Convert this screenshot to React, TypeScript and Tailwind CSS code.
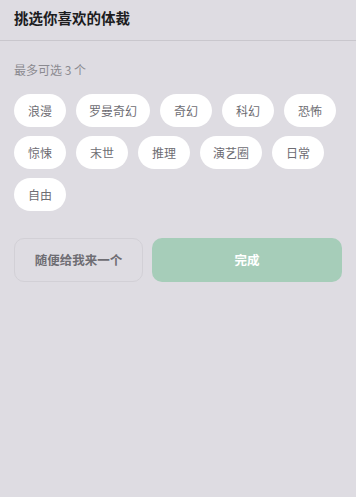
const GENRES = ['浪漫', '罗曼奇幻', '奇幻', '科幻', '恐怖', '惊悚', '末世', '推理', '演艺圈', '日常', '自由'];

const App = () => {
  return (
    <div
      className="h-[497px] w-[356px] bg-[#dedce2] text-[#1c1c1e]"
      style={{ fontFamily: '"Noto Sans CJK SC", "Noto Sans", sans-serif' }}
    >
      {/* 标题 */}
      <div className="flex h-[41px] items-center border-b border-[#c9c7cd] px-[14px] pb-[3px]">
        <h1 className="text-[14.5px] font-bold leading-none">挑选你喜欢的体裁</h1>
      </div>

      <div className="px-[14px]">
        <p className="mt-[21px] text-[12px] leading-[16px] text-[#8b8a90]">最多可选 3 个</p>

        {/* 体裁标签 */}
        <div className="mt-[16px] flex flex-wrap gap-x-[10px] gap-y-[9px]">
          {GENRES.map(g => (
            <button
              key={g}
              className="flex h-[33px] min-w-[52px] items-center justify-center rounded-full bg-white px-[13px] text-[12px] text-[#6e6d73]"
            >
              {g}
            </button>
          ))}
        </div>

        {/* 按钮 */}
        <div className="mt-[27px] flex gap-[9px]">
          <button className="flex h-[44px] w-[129px] items-center justify-center rounded-[10px] border border-[#d2d0d6] text-[12.5px] font-bold text-[#6e6d73]">
            随便给我来一个
          </button>
          <button className="flex h-[44px] flex-1 items-center justify-center rounded-[10px] bg-[#a6cdb9] text-[12.5px] font-bold text-white">
            完成
          </button>
        </div>
      </div>
    </div>
  );
};

export default App;
